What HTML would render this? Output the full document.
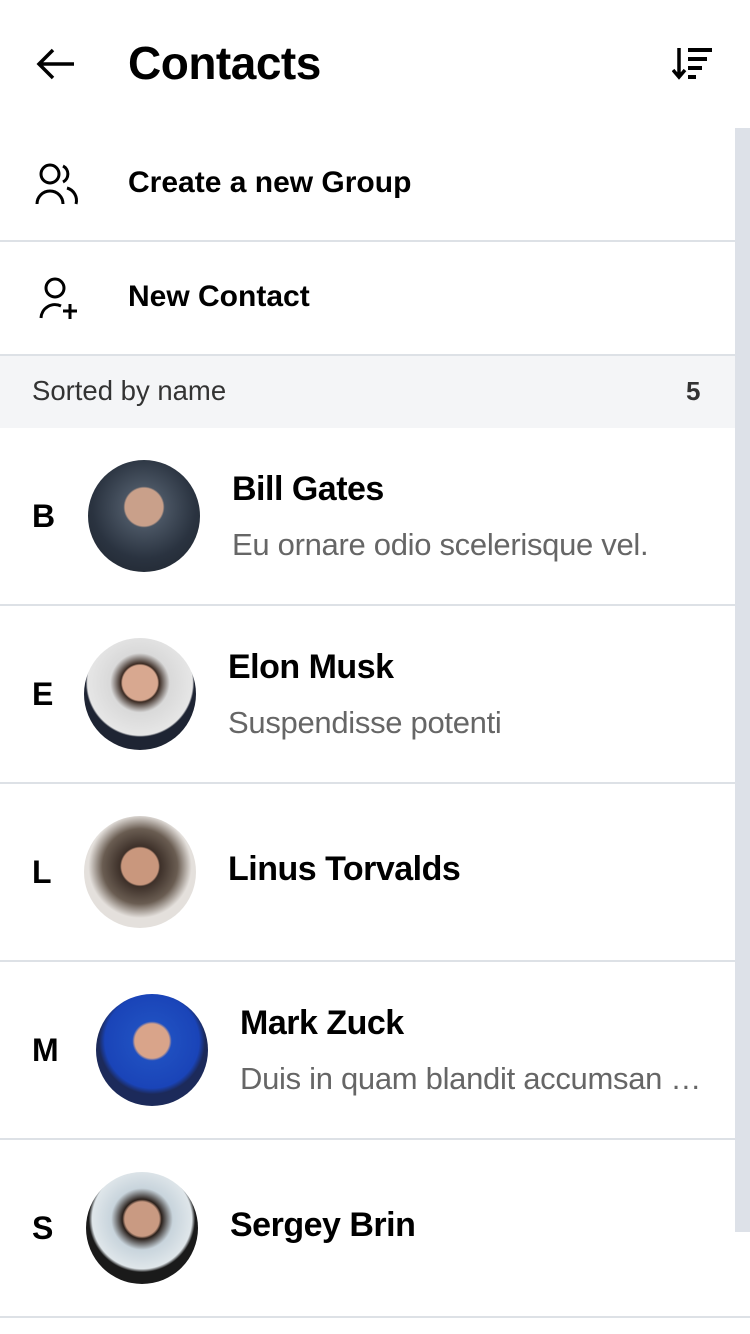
<!DOCTYPE html>
<html><head><meta charset="utf-8"><style>
*{margin:0;padding:0;box-sizing:border-box}
body{width:750px;height:1334px;background:#fff;position:relative;overflow:hidden;font-family:"Liberation Sans",Roboto,sans-serif;color:#000}
.a{position:absolute}
.t{position:absolute;white-space:nowrap}
.line{position:absolute;left:0;width:735px;height:2px;background:#dde1e6}
.av{position:absolute;width:112px;height:112px;border-radius:50%;overflow:hidden}
.nm{font-size:34px;font-weight:bold;letter-spacing:-0.5px}
.sb{font-size:31px;color:#666;letter-spacing:-0.3px}
.lt{font-size:32px;font-weight:bold}
</style></head><body>
<div class="a" style="left:735px;top:128px;width:15px;height:1104px;background:#dde1e8"></div>
<svg class="a" style="left:34px;top:46px" width="44" height="36" viewBox="0 0 44 36"><path d="M40 18H5M19 4L5 18l14 14" fill="none" stroke="#000" stroke-width="3.5"/></svg>
<div class="t" style="left:128px;top:36px;font-size:46px;font-weight:bold;letter-spacing:-0.5px">Contacts</div>
<svg class="a" style="left:672px;top:46px" width="44" height="36" viewBox="0 0 44 36"><path d="M7 2v28M1 24l6 7 6-7" fill="none" stroke="#000" stroke-width="3.5"/><rect x="16" y="2" width="24" height="4"/><rect x="16" y="11" width="19" height="4"/><rect x="16" y="20" width="14" height="4"/><rect x="16" y="29" width="8" height="4"/></svg>
<svg class="a" style="left:34px;top:162px" width="46" height="44" viewBox="0 0 46 44"><circle cx="16" cy="12" r="9" fill="none" stroke="#000" stroke-width="3"/><path d="M3 42a13 13 0 0 1 26 0M29 4a9 9 0 0 1 0 16M33 26a13 13 0 0 1 9 16" fill="none" stroke="#000" stroke-width="3"/></svg>
<div class="t" style="left:128px;top:166px;font-size:30px;font-weight:bold">Create a new Group</div>
<div class="line" style="top:240px"></div>
<svg class="a" style="left:34px;top:276px" width="46" height="44" viewBox="0 0 46 44"><circle cx="21" cy="12" r="9" fill="none" stroke="#000" stroke-width="3"/><path d="M7 42a14 14 0 0 1 20-12M36 28v15M29 35h14" fill="none" stroke="#000" stroke-width="3"/></svg>
<div class="t" style="left:128px;top:280px;font-size:30px;font-weight:bold">New Contact</div>
<div class="line" style="top:354px"></div>
<div class="a" style="left:0;top:356px;width:735px;height:72px;background:#f4f5f7"></div>
<div class="t" style="left:32px;top:375px;font-size:27.5px;color:#333">Sorted by name</div>
<div class="t" style="left:686px;top:376px;font-size:26px;font-weight:bold;color:#333">5</div>

<div class="t lt" style="left:32px;top:498px">B</div>
<div class="av" style="left:88px;top:460px;background:radial-gradient(circle at 50% 42%,#c9a08a 0 22%,#4a5563 24%,#2a3340 60%,#1d232c)"></div>
<div class="t nm" style="left:232px;top:470px">Bill Gates</div>
<div class="t sb" style="left:232px;top:527px">Eu ornare odio scelerisque vel.</div>
<div class="line" style="top:604px"></div>

<div class="t lt" style="left:32px;top:676px">E</div>
<div class="av" style="left:84px;top:638px;background:radial-gradient(circle at 50% 40%,#d8a890 0 20%,#3a2a22 22%,#d9d9d9 34%,#e6e6e6 60%,#1e2433 62%)"></div>
<div class="t nm" style="left:228px;top:648px">Elon Musk</div>
<div class="t sb" style="left:228px;top:705px">Suspendisse potenti</div>
<div class="line" style="top:782px"></div>

<div class="t lt" style="left:32px;top:854px">L</div>
<div class="av" style="left:84px;top:816px;background:radial-gradient(circle at 50% 45%,#c9977d 0 22%,#3d3029 24%,#6a5d52 45%,#e4e0dc 62%)"></div>
<div class="t nm" style="left:228px;top:850px">Linus Torvalds</div>
<div class="line" style="top:960px"></div>

<div class="t lt" style="left:32px;top:1032px">M</div>
<div class="av" style="left:96px;top:994px;background:radial-gradient(circle at 50% 42%,#d9a48a 0 20%,#1f4fc0 23%,#1a44b8 55%,#1c2a5a 62%)"></div>
<div class="t nm" style="left:240px;top:1004px">Mark Zuck</div>
<div class="t sb" style="left:240px;top:1061px;width:478px;overflow:hidden;text-overflow:ellipsis">Duis in quam blandit accumsan massa</div>
<div class="line" style="top:1138px"></div>

<div class="t lt" style="left:32px;top:1210px">S</div>
<div class="av" style="left:86px;top:1172px;background:radial-gradient(circle at 50% 42%,#c99a82 0 20%,#2a201b 23%,#c8d4dc 36%,#dfe6ea 58%,#1a1a1a 62%)"></div>
<div class="t nm" style="left:230px;top:1206px">Sergey Brin</div>
<div class="line" style="top:1316px;width:750px"></div>
</body></html>
